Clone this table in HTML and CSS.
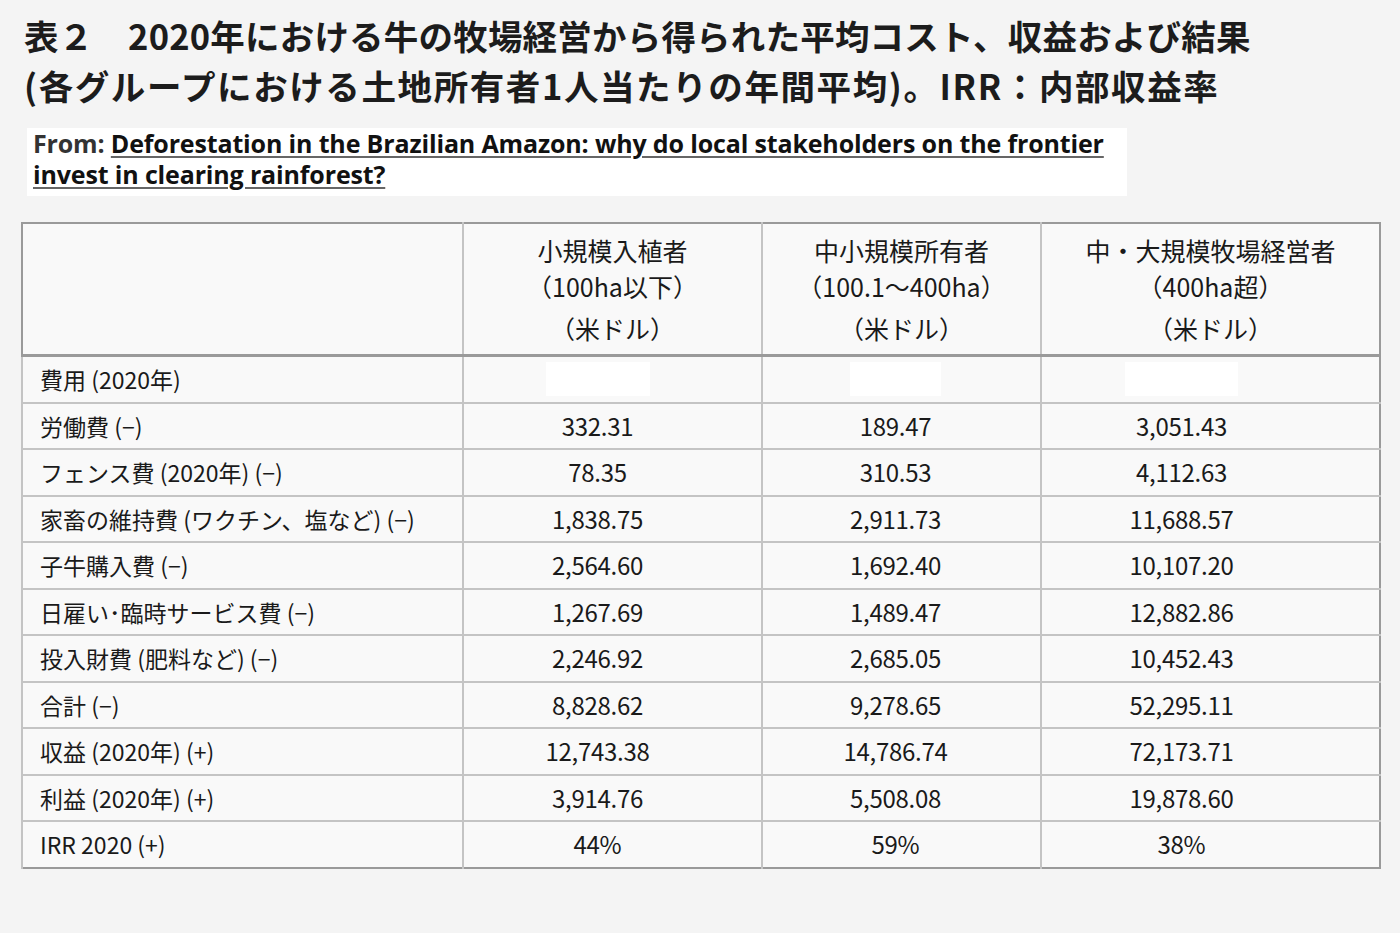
FILE: index.html
```html
<!DOCTYPE html>
<html lang="ja">
<head>
<meta charset="utf-8">
<link rel="stylesheet" href="styles.css">
</head>
<body>
<div class="page">
  <h1 class="title">表２　2020年における牛の牧場経営から得られた平均コスト、収益および結果<br><span class="line2">(各グループにおける土地所有者1人当たりの年間平均)。IRR：内部収益率</span></h1>
  <div class="from">From: <a class="link">Deforestation in the Brazilian Amazon: why do local stakeholders on the frontier<br>invest in clearing rainforest?</a></div>
  <table class="data">
    <colgroup>
      <col class="c1"><col class="c2"><col class="c3"><col class="c4">
    </colgroup>
    <thead>
      <tr>
        <th></th>
        <th><div class="h1">小規模入植者</div><div class="h2">（100ha以下）</div><div class="h3">（米ドル）</div></th>
        <th><div class="h1">中小規模所有者</div><div class="h2">（100.1～400ha）</div><div class="h3">（米ドル）</div></th>
        <th><div class="h1">中・大規模牧場経営者</div><div class="h2">（400ha超）</div><div class="h3">（米ドル）</div></th>
      </tr>
    </thead>
    <tbody>
      <tr><td>費用 (2020年)</td><td><span class="blank b2"></span></td><td><span class="blank b3"></span></td><td><span class="blank b4"></span></td></tr>
      <tr><td>労働費 (−)</td><td>332.31</td><td>189.47</td><td>3,051.43</td></tr>
      <tr><td>フェンス費 (2020年) (−)</td><td>78.35</td><td>310.53</td><td>4,112.63</td></tr>
      <tr><td>家畜の維持費 (ワクチン、塩など) (−)</td><td>1,838.75</td><td>2,911.73</td><td>11,688.57</td></tr>
      <tr><td>子牛購入費 (−)</td><td>2,564.60</td><td>1,692.40</td><td>10,107.20</td></tr>
      <tr><td>日雇い･臨時サービス費 (−)</td><td>1,267.69</td><td>1,489.47</td><td>12,882.86</td></tr>
      <tr><td>投入財費 (肥料など) (−)</td><td>2,246.92</td><td>2,685.05</td><td>10,452.43</td></tr>
      <tr><td>合計 (−)</td><td>8,828.62</td><td>9,278.65</td><td>52,295.11</td></tr>
      <tr><td>収益 (2020年) (+)</td><td>12,743.38</td><td>14,786.74</td><td>72,173.71</td></tr>
      <tr><td>利益 (2020年) (+)</td><td>3,914.76</td><td>5,508.08</td><td>19,878.60</td></tr>
      <tr><td>IRR 2020 (+)</td><td>44%</td><td>59%</td><td>38%</td></tr>
    </tbody>
  </table>
</div>
</body>
</html>
```

FILE: styles.css
```css
html, body {
  margin: 0;
  padding: 0;
  background: #f4f4f4;
}
body {
  font-family: "Noto Sans CJK JP", "Noto Sans", sans-serif;
  color: #1a1a1a;
}
.page {
  padding: 10px 0 0 0;
}
.title {
  margin: 0 0 0 24px;
  font-size: 34.5px;
  font-weight: 700;
  line-height: 50px;
  color: #1c1c1c;
  letter-spacing: 0.2px;
}
.line2 {
  letter-spacing: 1.6px;
}
.from {
  margin: 18px 0 0 27px;
  width: 1094px;
  padding: 0 0 6px 6px;
  background: #ffffff;
  font-family: "Open Sans", "Noto Sans", sans-serif;
  font-weight: 700;
  font-size: 25px;
  line-height: 31px;
  letter-spacing: -0.15px;
  color: #333;
}
.link {
  color: #111;
  text-decoration: underline;
  text-decoration-thickness: 2px;
  text-underline-offset: 3px;
  text-decoration-color: #666;
}
.data {
  margin: 26px 0 0 21px;
  width: 1358px;
  border-collapse: collapse;
  border: 2px solid #9a9a9a;
  background: #f9f9f9;
  table-layout: fixed;
  font-size: 24px;
}
.c1 { width: 441px; }
.c2 { width: 299px; }
.c3 { width: 279px; }
.c4 { width: 339px; }
.data th {
  font-weight: 400;
  font-size: 25px;
  height: 122px;
  border-left: 2px solid #c4c4c4;
  border-bottom: 3px solid #9a9a9a;
  vertical-align: top;
  padding: 8px 0 0 0;
  text-align: center;
  line-height: 36px;
}
.data th:first-child { border-left: none; }
.h3 { margin-top: 6px; }
.data td {
  height: 44.5px;
  padding: 0;
  border-top: 2px solid #c4c4c4;
  border-left: 2px solid #c4c4c4;
  text-align: center;
  line-height: 28px;
  letter-spacing: -0.3px;
}
.data td:first-child {
  text-align: left;
  padding-left: 17px;
  font-size: 23px;
  letter-spacing: 0;
}
.data td:nth-child(2) { padding-right: 30px; }
.data td:nth-child(3) { padding-right: 12px; }
.data td:nth-child(4) { padding-right: 58px; }
.data tbody tr:first-child td { border-top: none; }
.blank {
  display: inline-block;
  height: 34px;
  background: #ffffff;
  vertical-align: middle;
}
.b2 { width: 104px; }
.b3 { width: 91px; }
.b4 { width: 113px; }
```
